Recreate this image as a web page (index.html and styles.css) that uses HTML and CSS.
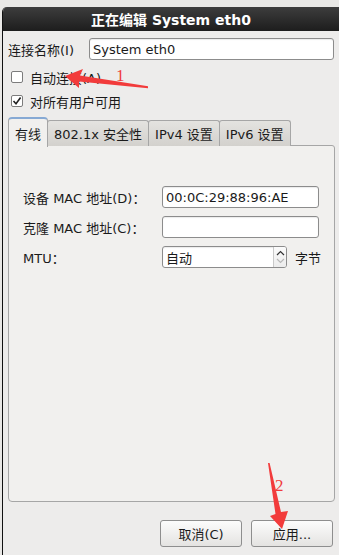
FILE: index.html
```html
<!DOCTYPE html>
<html lang="zh-CN">
<head>
    <meta charset="UTF-8">
    <title>正在编辑 System eth0</title>
    <link rel="stylesheet" href="styles.css">
</head>
<body>
    <div class="window">
        <div class="titlebar">正在编辑 System eth0</div>

        <div class="content">
            <div class="name-row">
                <label class="name-label">连接名称(I)</label>
                <div class="entry name-entry">System eth0</div>
            </div>

            <div class="checks">
                <div class="check-row">
                    <span class="checkbox"></span>
                    <span>自动连接(A)</span>
                </div>
                <div class="check-row">
                    <span class="checkbox">
                        <svg width="10" height="10" viewBox="0 0 10 10"><path d="M1.5 5 L4 7.8 L8.6 1.6" fill="none" stroke="#222" stroke-width="1.6"/></svg>
                    </span>
                    <span>对所有用户可用</span>
                </div>
            </div>

            <!-- Tabs -->
            <div class="tabs">
                <div class="tab active">有线</div>
                <div class="tab">802.1x 安全性</div>
                <div class="tab">IPv4 设置</div>
                <div class="tab">IPv6 设置</div>
            </div>

            <div class="panel">
                <div class="form-grid">
                    <div class="form-label">设备 MAC 地址(D)：</div>
                    <div class="entry">00:0C:29:88:96:AE</div>

                    <div class="form-label">克隆 MAC 地址(C)：</div>
                    <div class="entry"></div>

                    <div class="form-label">MTU：</div>
                    <div class="mtu-row">
                        <div class="entry spin">
                            <span class="spin-text">自动</span>
                            <span class="spin-buttons">
                                <svg width="9" height="6" viewBox="0 0 9 6"><path d="M1 5 L4.5 1.5 L8 5" fill="none" stroke="#333" stroke-width="1.2"/></svg>
                                <svg width="9" height="6" viewBox="0 0 9 6"><path d="M1 1 L4.5 4.5 L8 1" fill="none" stroke="#b8b8b8" stroke-width="1.2"/></svg>
                            </span>
                        </div>
                        <span>字节</span>
                    </div>
                </div>
            </div>

            <div class="actions">
                <button class="btn">取消(C)</button>
                <button class="btn">应用...</button>
            </div>
        </div>
    </div>

    <!-- red annotations -->
    <svg class="notes" width="339" height="555" viewBox="0 0 339 555">
        <polygon points="65,76 83,69 80,75.5 148,86.3 148,88.2 79,81.5 79,88" fill="#f23b3b"/>
        <text x="116" y="81" class="note-num">1</text>
        <polygon points="268,463 269.6,463 281,512 288,511 282,529 270,516 275.5,514" fill="#f23b3b"/>
        <text x="275" y="491" class="note-num">2</text>
    </svg>
</body>
</html>
```

FILE: styles.css
```css
* {
    box-sizing: border-box;
}

body {
    margin: 0;
    width: 339px;
    height: 555px;
    overflow: hidden;
    position: relative;
    background: #e9e8e6;
    font-family: "DejaVu Sans", "Noto Sans CJK SC", sans-serif;
    font-size: 13px;
    color: #1a1a1a;
}

/* Window frame */
.window {
    margin: 7px 0 0 2px;
    height: 548px;
    border-left: 1px solid #111;
    border-top-left-radius: 5px;
    background: #edeceb;
    overflow: hidden;
}

.titlebar {
    height: 24px;
    background: linear-gradient(#3d3d3d, #1d1d1d);
    color: #fff;
    font-weight: bold;
    font-size: 14px;
    display: flex;
    align-items: center;
    justify-content: center;
}

.content {
    padding: 0 4px 0 5px;
}

/* Name row */
.name-row {
    display: flex;
    align-items: center;
    margin-top: 7px;
}

.name-label {
    width: 81px;
}

.entry {
    height: 22px;
    background: #fff;
    border: 1px solid #8c8c8c;
    border-radius: 3px;
    padding: 0 3px;
    display: flex;
    align-items: center;
    box-shadow: inset 0 1px 1px rgba(0,0,0,0.08);
}

.name-entry {
    flex: 1;
    margin-right: 1px;
}

/* Check rows */
.checks {
    margin-top: 5px;
}

.check-row {
    height: 24px;
    display: flex;
    align-items: center;
}

.checkbox {
    width: 12px;
    height: 12px;
    margin: 0 7px 0 3px;
    background: #fff;
    border: 1px solid #7c7c7c;
    border-radius: 2px;
    display: flex;
    align-items: center;
    justify-content: center;
}

/* Tabs */
.tabs {
    display: flex;
    align-items: flex-end;
    margin-top: 4px;
    position: relative;
    z-index: 1;
}

.tab {
    height: 26px;
    padding: 0 6px;
    display: flex;
    align-items: center;
    background: linear-gradient(#e4e3e0, #d3d1cd);
    border: 1px solid #a6a6a6;
    border-bottom: none;
    border-radius: 3px 3px 0 0;
    margin-right: -1px;
}

.tab.active {
    height: 30px;
    margin-bottom: -1px;
    padding: 0 6px 0 6px;
    background: #f1f0ee;
    border-top: 2px solid #86a9d4;
    border-radius: 4px 4px 0 0;
}

/* Panel */
.panel {
    height: 357px;
    margin-top: -1px;
    background: #f1f0ee;
    border: 1px solid #a6a6a6;
    border-radius: 0 3px 4px 4px;
    padding: 40px 0 0 14px;
}

.form-grid {
    display: grid;
    grid-template-columns: 139px auto;
    row-gap: 8px;
    align-items: center;
}

.form-grid .entry {
    width: 157px;
}

.mtu-row {
    display: flex;
    align-items: center;
    gap: 8px;
}

.form-grid .spin {
    width: 125px;
    padding-right: 0;
    justify-content: space-between;
}

.spin-buttons {
    width: 13px;
    height: 100%;
    border-left: 1px solid #c9c9c9;
    display: flex;
    flex-direction: column;
    align-items: center;
    justify-content: center;
    gap: 2px;
    background: linear-gradient(#fbfbfb, #ececec);
    border-radius: 0 2px 2px 0;
}

.spin-buttons svg {
    display: block;
}

/* Buttons */
.actions {
    display: flex;
    justify-content: flex-end;
    gap: 9px;
    margin-top: 18px;
    padding-right: 2px;
}

.btn {
    width: 82px;
    height: 27px;
    font-family: inherit;
    font-size: 13px;
    color: #1a1a1a;
    background: linear-gradient(#fcfcfc, #e4e3e1);
    border: 1px solid #8e8e8e;
    border-radius: 3px;
    padding: 0;
}

/* Annotations */
.notes {
    position: absolute;
    top: 0;
    left: 0;
    pointer-events: none;
}

.note-num {
    font-family: "Liberation Serif", serif;
    font-size: 17px;
    fill: #f03c3c;
}
```
